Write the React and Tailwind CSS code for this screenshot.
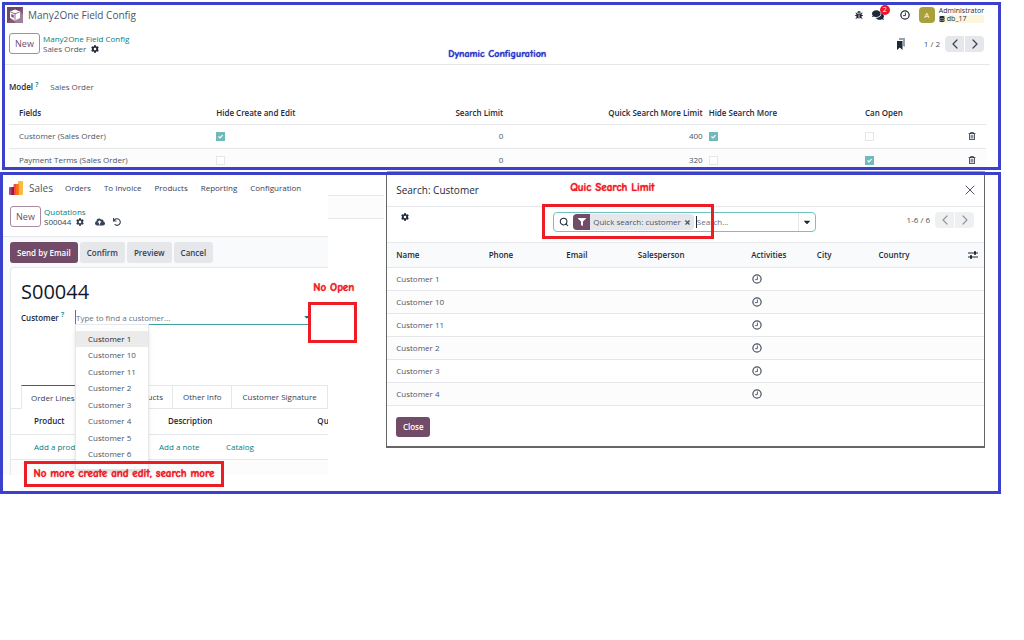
import React, { useState } from 'react';
import { FaBug, FaCaretDown, FaCloudUploadAlt, FaCog, FaComments, FaDatabase, FaFilter, FaRegTrashAlt, FaUndo } from 'react-icons/fa';
import { ChevronLeft, ChevronRight, Search, X } from 'lucide-react';

const configRows = [
  { name: 'Customer (Sales Order)', hideCreate: true, limit: 0, moreLimit: 400, hideMore: true, canOpen: false },
  { name: 'Payment Terms (Sales Order)', hideCreate: false, limit: 0, moreLimit: 320, hideMore: false, canOpen: true },
];

const suggestions = ['1', '10', '11', '2', '3', '4', '5', '6'].map((n) => `Customer ${n}`);
const searchResults = ['1', '10', '11', '2', '3', '4'].map((n) => `Customer ${n}`);
const salesMenu = ['Orders', 'To Invoice', 'Products', 'Reporting', 'Configuration'];

// handwritten notes drawn over the panels
const noteFont = "font-['Comic_Neue','Comic_Sans_MS','DejaVu_Sans'] font-bold whitespace-nowrap [text-shadow:0_0_1px_currentColor]";

const ClockIcon = ({ className }) => (
  <svg viewBox="0 0 16 16" className={className} fill="none" stroke="currentColor" aria-hidden="true">
    <circle cx="8" cy="8" r="6.6" strokeWidth="2" />
    <path d="M8.6 4v5H5" strokeWidth="1.5" />
  </svg>
);

const ModuleLogo = () => (
  <svg viewBox="0 0 16 16" className="size-4" aria-hidden="true">
    <rect width="16" height="16" fill="#875a7b" />
    <path d="M0 0h16L0 16z" fill="#6f4a66" />
    <path d="M12.500 4L16 7.500V16H9l-5-4z" fill="#a0809a" />
    <path d="M8 2.500l5 2v6.500l-5 2.500-5-2.500V4.500z" fill="#fff" />
    <path d="M3.500 5L8 6.800 12.500 5M8 6.800v6" fill="none" stroke="#875a7b" strokeWidth=".9" />
    <path d="M4.200 7l2.600 1v3l-2.600-1.200z" fill="#875a7b" />
  </svg>
);

const SalesLogo = () => (
  <svg viewBox="0 0 14 14" className="size-3.5" aria-hidden="true">
    <path d="M10 0h3a1 1 0 0 1 1 1v12a1 1 0 0 1-1 1H9V1a1 1 0 0 1 1-1z" fill="#fbb945" />
    <path d="M5.500 3H9v11H4.500V4a1 1 0 0 1 1-1z" fill="#f9464c" />
    <path d="M9 3h.8v10a1 1 0 0 1-.8 1H7V3z" fill="#fc6d12" />
    <path d="M1 6h3.500v8H1a1 1 0 0 1-1-1V7a1 1 0 0 1 1-1z" fill="#985184" />
    <path d="M2.500 6h2.500v8H2.500z" fill="#8f1a45" />
  </svg>
);

const BookmarksIcon = () => (
  <svg viewBox="0 0 10 12" className="h-3 w-2.5" aria-hidden="true">
    <path d="M3 0h6v9l-2-1V2H3z" fill="#9aa1ab" />
    <path d="M1 3h5.500v9L3.800 9.500 1 12z" fill="#1f2937" />
  </svg>
);

const SlidersIcon = () => (
  <svg viewBox="0 0 10 8" className="h-2 w-2.5" fill="none" stroke="#1f2937" aria-hidden="true">
    <path d="M0 2h10M0 6h10" strokeWidth="1" />
    <path d="M7 .3v3.400M3 4.300v3.400" strokeWidth="2" />
  </svg>
);

const CheckBox = ({ value, label }) => {
  const [checked, setChecked] = useState(value);
  return (
    <label className="relative block size-[9px]">
      <input
        type="checkbox"
        aria-label={label}
        checked={checked}
        onChange={(e) => setChecked(e.target.checked)}
        className="block size-[9px] appearance-none border border-gray-200 bg-white checked:border-[#71b9bb] checked:bg-[#71b9bb]"
      />
      {checked && (
        <svg viewBox="0 0 9 9" className="pointer-events-none absolute inset-0" fill="none" stroke="#fff" aria-hidden="true">
          <path d="M2.500 4.500L4 6l2.600-2.800" strokeWidth="1.200" />
        </svg>
      )}
    </label>
  );
};

const Pager = ({ text, muted }) => (
  <div className="flex items-center gap-[5px]">
    <span>{text}</span>
    <div className={muted ? 'flex gap-px text-gray-600 opacity-60' : 'flex gap-px text-gray-700'}>
      <button aria-label="Previous" className="flex h-4 w-[19px] items-center justify-center rounded-l-sm bg-gray-200">
        <ChevronLeft className="size-4" strokeWidth={1.800} />
      </button>
      <button aria-label="Next" className="flex h-4 w-[19px] items-center justify-center rounded-r-sm bg-gray-200">
        <ChevronRight className="size-4" strokeWidth={1.800} />
      </button>
    </div>
  </div>
);

const NewButton = () => (
  <button className="h-[21px] w-[31px] rounded-[3px] border border-[#a98aa0] text-[9px] font-medium text-[#714b67]">New</button>
);

const ConfigPanel = () => (
  <section className="ml-0.5 border-3 border-[#3b41cc]">
    <header className="flex h-5 items-center justify-between pl-0.5 pr-3.5">
      <div className="flex items-center gap-[5px]">
        <ModuleLogo />
        <h1 className="text-[10px]">Many2One Field Config</h1>
      </div>
      <div className="flex items-center text-gray-800">
        <FaBug className="size-2" />
        <div className="relative ml-[9px]">
          <FaComments className="size-3" />
          <span className="absolute -top-1 left-2 flex size-2.5 items-center justify-center rounded-full bg-[#f0142f] text-[7px] text-white">2</span>
        </div>
        <ClockIcon className="ml-4 size-2.5" />
        <span className="ml-[9px] flex size-4 items-center justify-center rounded-sm bg-[#a9a03c] text-[8px] text-white">A</span>
        <div className="ml-1 text-[7px] leading-2">
          <div>Administrator</div>
          <div className="flex items-center gap-0.5 bg-[#fdf6dc]">
            <FaDatabase className="size-[6px]" />
            db_17
          </div>
        </div>
      </div>
    </header>

    <div className="relative mr-2 flex h-10 items-center justify-between border-b border-gray-200 pl-1 pr-1.5 pb-0.5">
      <div className="flex items-center gap-[3px]">
        <NewButton />
        <div className="leading-[10px]">
          <a href="#config" className="font-medium text-[#017e84]">Many2One Field Config</a>
          <div className="flex items-center gap-[5px]">
            Sales Order
            <FaCog className="size-2 text-gray-800" />
          </div>
        </div>
      </div>
      <div className="flex items-center gap-[18px]">
        <BookmarksIcon />
        <Pager text="1 / 2" />
      </div>
      <p className={`absolute bottom-1 left-[45%] text-[10px] text-[#2b35c9] ${noteFont}`}>Dynamic Configuration</p>
    </div>

    <div className="flex items-center gap-3 px-1 pt-4">
      <div className="font-semibold text-gray-800">
        Model <sup className="text-[7px] text-[#017e84]">?</sup>
      </div>
      <span>Sales Order</span>
    </div>

    <div className="pl-1 pr-3">
      <table className="mt-2 w-full table-fixed text-left">
        <colgroup>
          <col className="w-[21%]" />
          <col className="w-[14%]" />
          <col className="w-[16%]" />
          <col className="w-[20%]" />
          <col className="w-[16%]" />
          <col />
          <col className="w-7" />
        </colgroup>
        <thead>
          <tr className="border-b border-gray-200 text-gray-800 [&>th]:pt-1.5 [&>th]:pb-[5px] [&>th]:font-semibold">
            <th className="pl-2.5">Fields</th>
            <th className="pl-0.5">Hide Create and Edit</th>
            <th className="pr-1 text-right">Search Limit</th>
            <th className="text-right whitespace-nowrap">Quick Search More Limit</th>
            <th className="pl-1.5">Hide Search More</th>
            <th className="pl-1.5">Can Open</th>
            <th />
          </tr>
        </thead>
        <tbody>
          {configRows.map((row) => (
            <tr key={row.name} className="border-b border-gray-200 even:bg-[#fcfcfc] last:border-0 [&>td]:pt-[5px] [&>td]:pb-1.5 last:[&>td]:pb-px">
              <td className="pl-2.5">{row.name}</td>
              <td className="pl-0.5"><CheckBox value={row.hideCreate} label="Hide Create and Edit" /></td>
              <td className="pr-1 text-right">{row.limit}</td>
              <td className="text-right">{row.moreLimit}</td>
              <td className="pl-1.5"><CheckBox value={row.hideMore} label="Hide Search More" /></td>
              <td className="pl-1.5"><CheckBox value={row.canOpen} label="Can Open" /></td>
              <td>
                <button aria-label="Delete" className="mx-auto block text-gray-800">
                  <FaRegTrashAlt className="size-2" />
                </button>
              </td>
            </tr>
          ))}
        </tbody>
      </table>
    </div>
  </section>
);

const SalesPanel = () => (
  <div className="relative min-w-0 flex-[326]">
    <div className="overflow-hidden">
      <nav className="flex h-[26px] items-center pl-1.5">
        <SalesLogo />
        <span className="ml-1.5 mr-3 text-[10px]">Sales</span>
        <div className="flex gap-[13px] text-gray-700">
          {salesMenu.map((item) => (
            <a key={item} href="#menu" className="whitespace-nowrap">{item}</a>
          ))}
        </div>
      </nav>

      <div className="flex h-9 items-center gap-[3px] border-b border-gray-200 pl-[7px] pb-1">
        <NewButton />
        <div className="leading-[10px]">
          <a href="#quotations" className="font-medium text-[#017e84]">Quotations</a>
          <div className="flex items-center text-gray-700">
            S00044
            <FaCog className="ml-[5px] size-2" />
            <FaCloudUploadAlt className="ml-[11px] size-2.5" />
            <FaUndo className="ml-2 size-2" />
          </div>
        </div>
      </div>

      <div className="bg-gray-50 pl-[7px]">
        <div className="flex gap-0.5 pt-[5px] pb-1 font-semibold text-gray-700">
          <button className="h-[21px] rounded-[3px] bg-[#714b67] px-[7px] text-white">Send by Email</button>
          <button className="h-[21px] rounded-[3px] bg-gray-200 px-[7px]">Confirm</button>
          <button className="h-[21px] rounded-[3px] bg-gray-200 px-[7px]">Preview</button>
          <button className="h-[21px] rounded-[3px] bg-gray-200 px-[7px]">Cancel</button>
        </div>

        <div className="rounded-tl-sm border-t border-l border-gray-200 bg-white">
          <h2 className="pt-2.5 pl-2.5 text-[20px] leading-7 font-medium text-gray-900">S00044</h2>
          <div className="flex items-center pt-1 pl-2.5 pr-[18px]">
            <label htmlFor="customer" className="w-[54px] shrink-0 font-semibold text-gray-800">
              Customer <sup className="text-[7px] text-[#017e84]">?</sup>
            </label>
            <div className="relative flex min-w-0 flex-1 items-center border-b border-[#3f9fa3]">
              <input id="customer" placeholder="Type to find a customer..." className="h-3.5 w-full border-l border-gray-500 placeholder:text-gray-500 outline-none" />
              <FaCaretDown className="size-2 text-[#017e84]" />
              <ul className="absolute top-full left-0 z-10 w-[74px] border border-gray-200 bg-white py-1.5 shadow-md">
                {suggestions.map((name, i) => (
                  <li key={name} className={i === 0 ? 'h-4 bg-[#ebebeb] pl-3 leading-4 text-gray-800' : 'h-4 pl-3 leading-4 even:h-[17px]'}>
                    {name}
                  </li>
                ))}
              </ul>
            </div>
          </div>

          <div role="tablist" className="mt-[60px] flex border-b border-gray-200 pl-2.5 text-gray-700">
            <button role="tab" aria-selected="true" className="-mb-px h-6 w-[65px] border-x border-t border-x-gray-200 border-t-[#714b67] bg-white pl-[9px] text-left whitespace-nowrap">Order Lines</button>
            <button role="tab" className="w-[87px] border-t border-r border-gray-200 pr-[9px] text-right whitespace-nowrap">Optional Products</button>
            <button role="tab" className="border-t border-r border-gray-200 px-2.5 whitespace-nowrap">Other Info</button>
            <button role="tab" className="border-t border-r border-gray-200 px-2.5 whitespace-nowrap">Customer Signature</button>
          </div>

          <table className="w-full table-fixed text-left">
            <thead>
              <tr className="h-[25px] border-b border-gray-200 text-gray-800">
                <th className="w-[157px] pl-[23px] font-semibold">Product</th>
                <th className="font-semibold">Description</th>
                <th className="w-[11px] font-semibold">Qu</th>
              </tr>
            </thead>
            <tbody>
              <tr className="h-[25px] border-b border-gray-200 text-[#017e84]">
                <td colSpan={3}>
                  <div className="flex pl-[23px]">
                    <a href="#product" className="w-[125px] whitespace-nowrap">Add a product</a>
                    <a href="#note" className="w-[67px] whitespace-nowrap">Add a note</a>
                    <a href="#catalog">Catalog</a>
                  </div>
                </td>
              </tr>
              <tr className="h-4 bg-[#fcfcfc]">
                <td colSpan={3} />
              </tr>
            </tbody>
          </table>
        </div>
      </div>
    </div>
    <p className={`absolute -bottom-3 left-[21px] z-20 w-[200px] border-3 border-[#ee1c25] py-[3px] text-center text-[11px] leading-[14px] text-[#ee1c25] ${noteFont}`}>
      No more create and edit, search more
    </p>
  </div>
);

const SearchDialog = () => (
  <div role="dialog" aria-label="Search: Customer" className="min-w-0 flex-[598] border-x border-b-2 border-[#666]">
    <div className="relative flex h-8 items-center justify-between border-b border-gray-200 pl-[9px] pr-1.5 pb-0.5">
      <h2 className="text-[10px] font-medium text-gray-800">Search: Customer</h2>
      <p className={`absolute top-[7px] left-[183px] text-[11px] text-[#ee1c25] ${noteFont}`}>Quic Search Limit</p>
      <button aria-label="Close dialog" className="text-gray-600">
        <X className="size-4" strokeWidth={1.500} />
      </button>
    </div>

    <div className="flex h-[35px] items-start pl-[14px] pr-2.5 pt-[5px]">
      <button aria-label="Settings" className="mt-[1px] text-gray-800">
        <FaCog className="size-2" />
      </button>
      <div className="relative ml-[144px] flex h-5 w-[263px] items-center rounded-sm border border-[#71c4c6]">
        <Search className="ml-[5px] size-2.5 shrink-0 text-gray-800" strokeWidth={2.500} />
        <div className="ml-1 flex h-4 shrink-0 items-center overflow-hidden rounded-sm bg-gray-200">
          <span className="flex h-4 w-[17px] items-center justify-center bg-[#714b67]">
            <FaFilter className="size-2 text-white" />
          </span>
          <span className="px-[3px] whitespace-nowrap">Quick search: customer</span>
          <button aria-label="Remove filter" className="pr-[3px]">
            <X className="size-[7px]" strokeWidth={4} />
          </button>
        </div>
        <input aria-label="Search" placeholder="Search..." className="ml-0.5 h-3 min-w-0 flex-1 border-l border-gray-800 placeholder:text-gray-500 outline-none" />
        <button aria-label="Search options" className="flex h-full w-[17px] shrink-0 items-center justify-center border-l border-gray-200 text-gray-800">
          <FaCaretDown className="size-2.5" />
        </button>
        <span className="pointer-events-none absolute -top-[9px] -left-3 h-[35px] w-[172px] border-3 border-[#ee1c25]" />
      </div>
      <div className="ml-auto">
        <Pager text="1-6 / 6" muted />
      </div>
    </div>

    <table className="w-full table-fixed text-left">
      <thead>
        <tr className="h-[25px] border-y border-gray-200 bg-gray-50 text-gray-800">
          <th className="w-[17%] pl-[9px] font-semibold">Name</th>
          <th className="w-[13%] font-semibold">Phone</th>
          <th className="w-[12%] font-semibold">Email</th>
          <th className="w-[19%] font-semibold">Salesperson</th>
          <th className="w-[11%] font-semibold">Activities</th>
          <th className="w-[10%] font-semibold">City</th>
          <th className="pl-0.5 font-semibold">Country</th>
          <th className="w-4"><SlidersIcon /></th>
        </tr>
      </thead>
      <tbody>
        {searchResults.map((name) => (
          <tr key={name} className="h-[23px] border-b border-gray-200 even:bg-[#fcfcfc]">
            <td className="pl-[9px]">{name}</td>
            <td />
            <td />
            <td />
            <td className="pl-px"><ClockIcon className="size-2.5 text-gray-600" /></td>
            <td />
            <td />
            <td />
          </tr>
        ))}
      </tbody>
    </table>

    <footer className="px-[9px] pt-[11px] pb-[9px]">
      <button className="h-5 w-[34px] rounded-[3px] bg-[#714b67] font-semibold text-white">Close</button>
    </footer>
  </div>
);

const App = () => (
  <main className="min-h-screen bg-white pt-0.5 pr-[23px] font-['Segoe_UI','Open_Sans',sans-serif] text-[8px] leading-3 text-gray-600">
    <ConfigPanel />
    <div className="flex h-0.5 pr-4">
      <div className="flex-[387]" />
      <div className="h-px flex-[598] self-end bg-gray-400" />
    </div>
    <section className="flex items-start border-3 border-[#3b41cc] pr-[13px] pb-4">
      <SalesPanel />
      <div className="relative flex-[58] pt-5">
        <div className="mr-0.5 h-6 border-y border-gray-200 bg-[#fcfcfc]" />
        <p className={`absolute top-[107px] -left-[15px] text-[11px] text-[#ee1c25] ${noteFont}`}>No Open</p>
        <span className="absolute top-[127px] -left-5 h-[41px] w-[49px] border-3 border-[#ee1c25]" />
      </div>
      <SearchDialog />
    </section>
  </main>
);

export default App;
